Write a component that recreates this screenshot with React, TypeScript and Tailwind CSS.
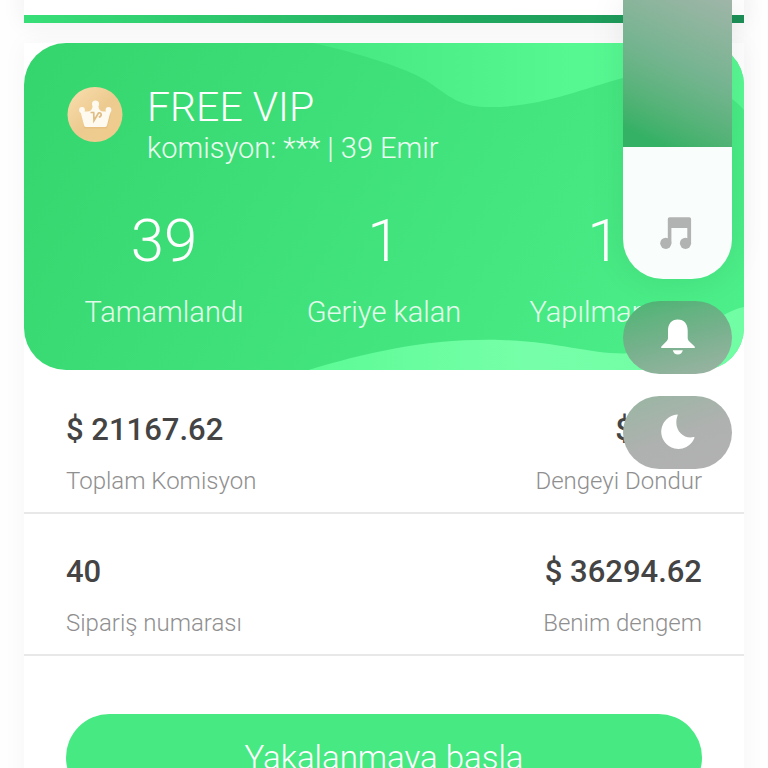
const stats = [
    { value: "39", label: "Tamamlandı" },
    { value: "1", label: "Geriye kalan" },
    { value: "1", label: "Yapılmamış" },
];

const balances = [
    [
        { value: "$ 21167.62", label: "Toplam Komisyon" },
        { value: "$ 0.00", label: "Dengeyi Dondur" },
    ],
    [
        { value: "40", label: "Sipariş numarası" },
        { value: "$ 36294.62", label: "Benim dengem" },
    ],
];

const CrownBadge = () => (
    <svg viewBox="0 0 56 56" className="size-14 shrink-0" aria-hidden="true">
        <defs>
            <linearGradient id="gold" x1="0" y1="0" x2="1" y2="1">
                <stop offset="0" stopColor="#fadfb0" />
                <stop offset="0.5" stopColor="#edcb90" />
                <stop offset="1" stopColor="#f0cb8c" />
            </linearGradient>
        </defs>
        <circle cx="28" cy="27.500" r="27.500" fill="url(#gold)" />
        <path d="M17 41.500h23l4-14-9 1-6-7-6 7-8-1z" fill="#d9ac66" opacity="0.3" />
        <g fill="#fffaf0">
            <circle cx="28.500" cy="17" r="3.500" />
            <circle cx="15" cy="23" r="2.900" />
            <circle cx="41.500" cy="23" r="2.900" />
            <path d="M13.500 24.500 20 24.500c3.300.2 5-1.500 5.800-5.500h5.400c.8 4 2.500 5.700 5.800 5.500h6.500L40 38.200a2 2 0 0 1-2 1.800H19a2 2 0 0 1-2-1.800z" />
        </g>
        <path d="M23.500 25.500h3.200l.3 8 4.500-7.500c3-.8 4 2.800.3 4.200" fill="none" stroke="#dfbd84" strokeWidth="1.700" />
    </svg>
);

const MusicIcon = () => (
    <svg viewBox="0 0 32 33" className="h-[33px] w-8" fill="#b1b3b2" aria-hidden="true">
        <circle cx="5.800" cy="26.300" r="5.600" />
        <circle cx="25.500" cy="26.300" r="5.600" />
        <path d="M7.800 2a1.800 1.800 0 0 1 1.800-1.800h19.700A1.800 1.800 0 0 1 31.100 2v24.300h-3.800V11H11.400v15.300H7.800z" />
    </svg>
);

const BellIcon = () => (
    <svg viewBox="0 0 34 36" className="h-9 w-[34px]" fill="#fff" aria-hidden="true">
        <path d="M7 11.500C7 5 10.500.5 16.800.5S26.700 5 26.700 11.500V19c0 1.200.4 2 1.200 2.900l5.700 5.500c.7.800.4 1.600-.5 1.600H.9c-.9 0-1.200-.8-.5-1.600L5.800 22C6.600 21 7 20.200 7 19z" />
        <path d="M11.800 31.200h10c-.6 2.800-2.500 4.400-5 4.400s-4.400-1.600-5-4.400z" />
    </svg>
);

const MoonIcon = () => (
    <svg viewBox="0 0 34 35" className="h-[35px] w-[34px]" fill="#fff" aria-hidden="true">
        <path d="M16.300.5A17.200 17.200 0 1 0 33.400 24c.3-.8-.1-1.200-.8-1C22.500 25.500 11.500 15.500 16.600 1.500c.2-.6.200-1-.3-1z" />
    </svg>
);

const VipCard = () => (
    <section className="relative overflow-hidden rounded-[42px] bg-linear-120 from-[#34d56d] to-[#4df08b] p-10 text-white">
        <svg viewBox="0 0 718 327" preserveAspectRatio="none" className="absolute inset-0 h-full w-full" aria-hidden="true">
            <defs>
                <linearGradient id="top-wave" x1="0" x2="1">
                    <stop offset="0" stopColor="#45e781" />
                    <stop offset="0.6" stopColor="#56f892" />
                    <stop offset="1" stopColor="#59f894" />
                </linearGradient>
                <linearGradient id="bottom-wave" x1="0" x2="1">
                    <stop offset="0" stopColor="#5cfb96" />
                    <stop offset="0.5" stopColor="#76ffa8" />
                    <stop offset="1" stopColor="#70fda4" />
                </linearGradient>
            </defs>
            <path d="M288 0C325 8 368 21 391 32c28 14 35 31 70 32 52 1 92-17 136-29 45-11 92 0 121 32V0z" fill="url(#top-wave)" />
            <path d="M284 327c59-18 122-32 192-30 71 2 102 21 152 10 43-9 61-37 90-43v63z" fill="url(#bottom-wave)" />
        </svg>
        <div className="relative">
            <div className="flex gap-6 pl-[3px]">
                <div className="pt-1">
                    <CrownBadge />
                </div>
                <div>
                    <h1 className="text-[41px] leading-12">FREE VIP</h1>
                    <p className="text-[29px] leading-[34px] text-white/90">komisyon: *** | 39 Emir</p>
                </div>
            </div>
            <div className="-mx-2.5 mt-[41px] grid grid-cols-3 text-center">
                {stats.map((stat) => (
                    <div key={stat.label}>
                        <p className="text-[60px] leading-[70px]">{stat.value}</p>
                        <p className="mt-[18px] text-[29px] leading-9 text-white/85">{stat.label}</p>
                    </div>
                ))}
            </div>
        </div>
    </section>
);

const SystemControls = () => (
    <aside className="absolute top-0 right-9 z-10 flex w-[109px] flex-col gap-[22px]">
        <div className="relative overflow-hidden rounded-b-[40px] bg-[#f9fdfb] shadow-[0_0_36px_rgba(0,0,0,0.08)]">
            <input
                type="range"
                aria-label="Müzik sesi"
                defaultValue={40}
                className="absolute inset-0 h-full w-full cursor-pointer opacity-0"
            />
            <div className="h-[147px] bg-linear-205 from-[#9fb5a8] via-[#75b490] via-45% to-[#34b165] to-90%" />
            <div className="flex h-[132px] items-end justify-center pr-1 pb-[29px]">
                <MusicIcon />
            </div>
        </div>
        <button aria-label="Bildirimler" className="flex h-[73px] items-center justify-center rounded-full bg-linear-165 from-[#48b572] via-[#75b18c] to-[#9db3a5] pb-0.5">
            <BellIcon />
        </button>
        <button aria-label="Rahatsız etmeyin" className="flex h-[73px] items-center justify-center rounded-full bg-linear-160 from-[#98b6a2] via-[#afb1b0] via-55% to-[#b1b1b1] pb-0.5">
            <MoonIcon />
        </button>
    </aside>
);

export default function App() {
    return (
        <div className="relative h-screen overflow-hidden bg-[#fefefe] px-6 font-['Roboto',sans-serif] font-light">
            <div className="-mt-6 h-[47px] border-b-8 border-[#2bc36c] bg-white shadow-[0_0_24px_rgba(90,40,50,0.07)] [border-image:linear-gradient(90deg,#38df78,#20a95f_60%,#1c8f57)_1]" />
            <main className="mt-5 min-h-screen bg-white shadow-[0_0_24px_rgba(0,0,0,0.04)]">
                <VipCard />
                <div className="pt-0.5">
                    {balances.map((row) => (
                        <dl key={row[0].label} className="flex justify-between border-b-2 border-[#e8e8e8] px-[42px] pt-10 pb-[15px]">
                            {row.map((item, i) => (
                                <div key={item.label} className={i === 1 ? "flex flex-col-reverse text-right" : "flex flex-col-reverse"}>
                                    <dt className="mt-[17px] text-2xl text-[#8f8f8f]">{item.label}</dt>
                                    <dd className="text-[31px] leading-9 font-medium text-[#444]">{item.value}</dd>
                                </div>
                            ))}
                        </dl>
                    ))}
                </div>
                <div className="px-[42px] pt-[58px]">
                    <button className="h-[87px] w-full rounded-full bg-[#47e983] text-[33px] text-white">Yakalanmaya başla</button>
                </div>
            </main>
            <SystemControls />
        </div>
    );
}
